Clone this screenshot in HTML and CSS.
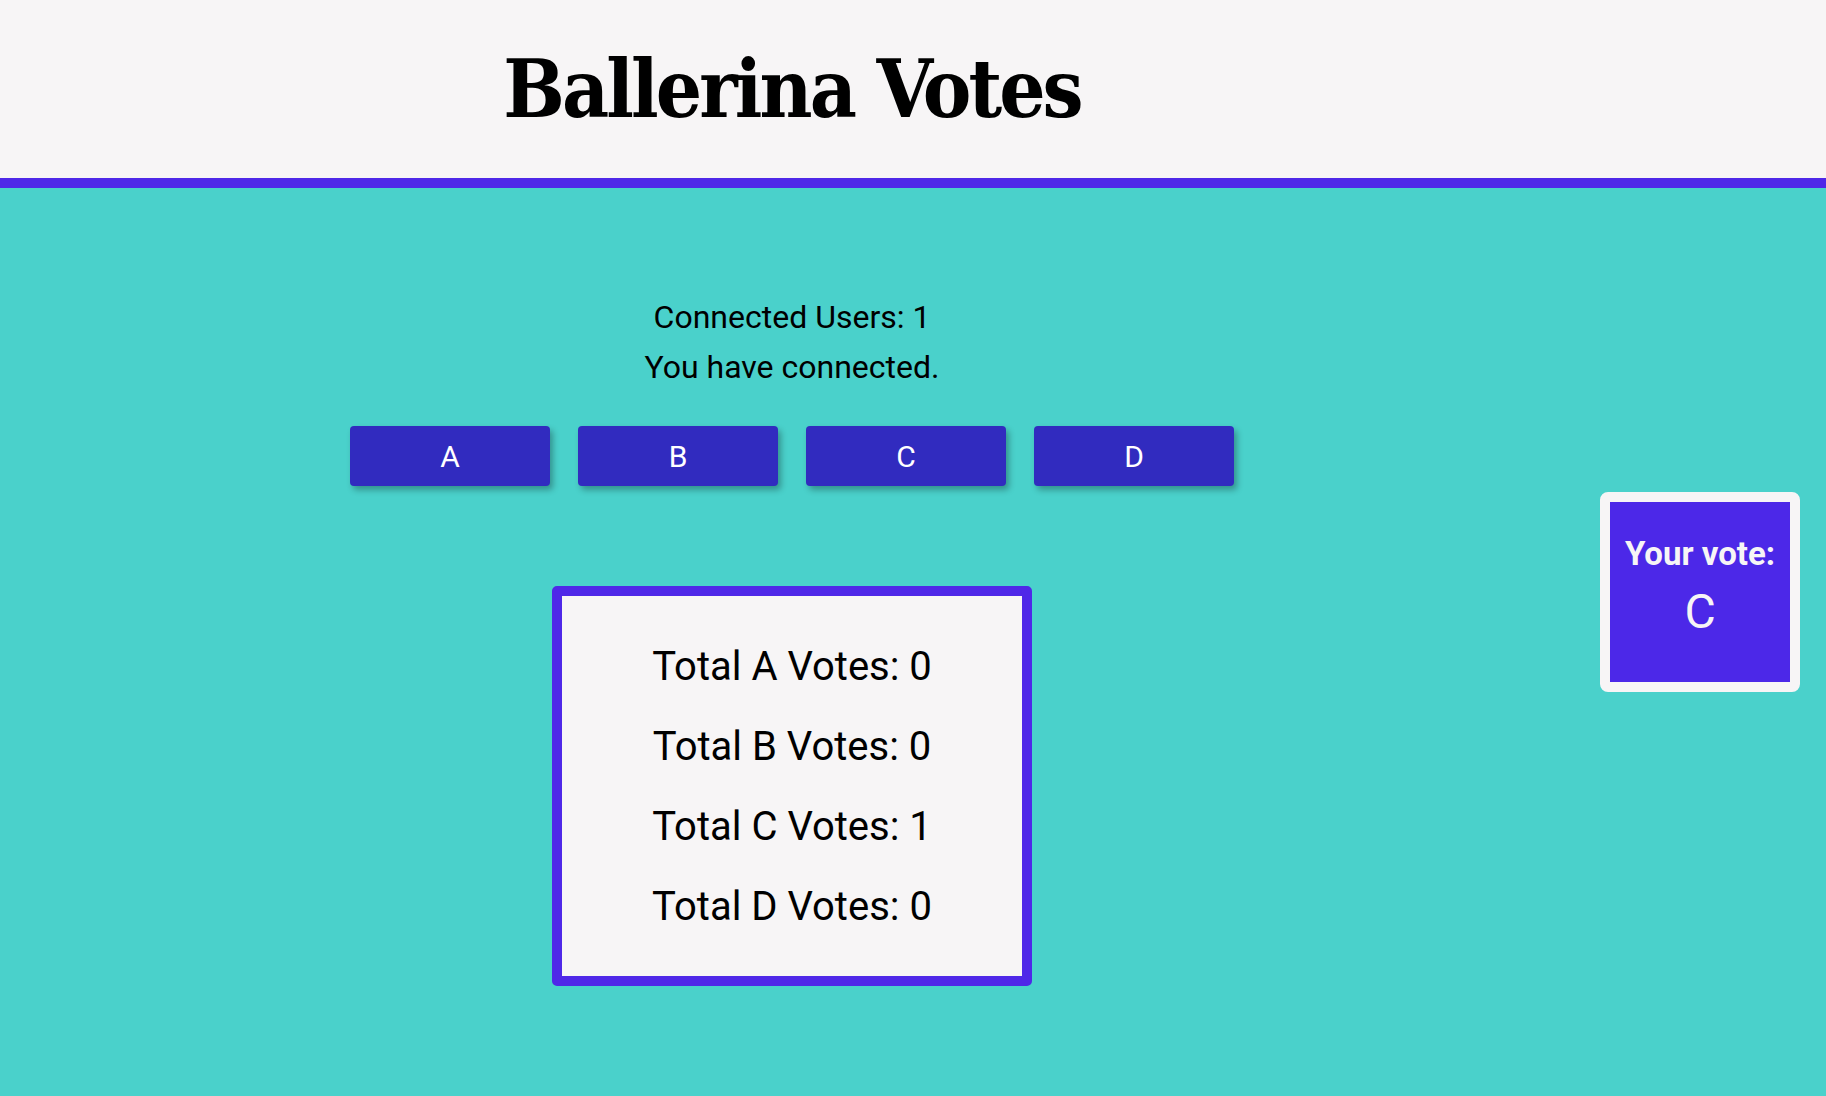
FILE: index.html
```html
<!DOCTYPE html>
<html lang="en">
<head>
<meta charset="utf-8">
<title>Ballerina Votes</title>
<link rel="stylesheet" href="styles.css">
</head>
<body>
  <header class="header">
    <div class="header-main">
      <h1 class="title">Ballerina Votes</h1>
    </div>
    <div class="header-side"></div>
  </header>
  <div class="page">
    <main class="main">
      <div class="status">
        <div class="status-line">Connected Users: 1</div>
        <div class="status-line">You have connected.</div>
      </div>
      <div class="buttons">
        <button class="vote-btn">A</button>
        <button class="vote-btn">B</button>
        <button class="vote-btn">C</button>
        <button class="vote-btn">D</button>
      </div>
      <div class="totals">
        <div class="total-line">Total A Votes: 0</div>
        <div class="total-line">Total B Votes: 0</div>
        <div class="total-line">Total C Votes: 1</div>
        <div class="total-line">Total D Votes: 0</div>
      </div>
    </main>
    <aside class="side">
      <div class="your-vote">
        <div class="your-vote-label">Your vote:</div>
        <div class="your-vote-value">C</div>
      </div>
    </aside>
  </div>
</body>
</html>
```
FILE: styles.css
```css
html, body {
  margin: 0;
  padding: 0;
}
body {
  background: #4ad1cb;
  font-family: Roboto, "Liberation Sans", sans-serif;
  color: #000;
}
.header {
  display: grid;
  grid-template-columns: 1fr 242px;
  height: 178px;
  background: #f7f5f6;
  border-bottom: 10px solid #4f28e8;
}
.header-main {
  display: flex;
  justify-content: center;
  align-items: flex-start;
  padding-top: 48px;
}
.title {
  margin: 0;
  font-family: "DejaVu Serif", "Liberation Serif", serif;
  font-stretch: condensed;
  font-weight: 700;
  font-size: 81px;
  line-height: 81px;
  letter-spacing: -2.9px;
  white-space: nowrap;
}
.page {
  display: grid;
  grid-template-columns: 1fr 242px;
  min-height: 908px;
}
.main {
  display: flex;
  flex-direction: column;
  align-items: center;
  padding-top: 104px;
}
.status {
  text-align: center;
  font-size: 32px;
  line-height: 50px;
}
.buttons {
  display: flex;
  gap: 28px;
  margin-top: 34px;
}
.vote-btn {
  width: 200px;
  height: 60px;
  border: none;
  border-radius: 4px;
  background: #312bbf;
  color: #fff;
  font-family: Roboto, "Liberation Sans", sans-serif;
  font-size: 30px;
  font-weight: 400;
  padding: 0;
  box-shadow: 3px 4px 6px rgba(0, 0, 0, 0.3);
  cursor: pointer;
}
.totals {
  margin-top: 100px;
  width: 460px;
  background: #f7f5f6;
  border: 10px solid #4f28e8;
  border-radius: 5px;
  padding: 31px 0 29px;
  text-align: center;
  font-size: 40px;
  line-height: 80px;
}
.side {
  padding-top: 304px;
  padding-left: 16px;
}
.your-vote {
  width: 180px;
  height: 148px;
  background: #4c28e8;
  border: 10px solid #f7f5f6;
  border-radius: 8px;
  color: #f7f5f6;
  text-align: center;
  padding-top: 32px;
}
.your-vote-label {
  font-size: 33px;
  font-weight: 700;
  line-height: 40px;
}
.your-vote-value {
  margin-top: 10px;
  font-size: 48px;
  line-height: 56px;
}
```
